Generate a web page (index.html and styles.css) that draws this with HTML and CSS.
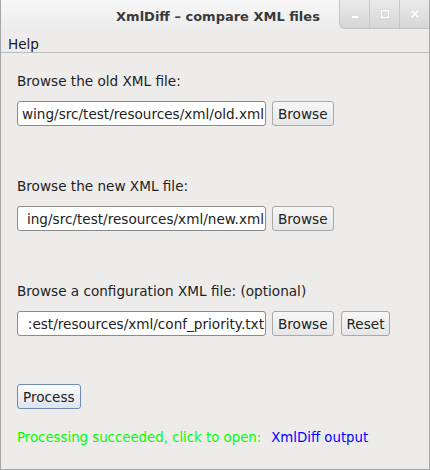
FILE: index.html
```html
<!DOCTYPE html>
<html>
<head>
<meta charset="utf-8">
<link rel="stylesheet" href="styles.css">
</head>
<body>
<div class="window">
  <div class="titlebar">
    <div class="title">XmlDiff – compare XML files</div>
    <div class="wbtns">
      <div class="wbtn"><svg width="10" height="10" viewBox="0 0 10 10"><rect x="2" y="7" width="6" height="2" fill="#fff"/></svg></div>
      <div class="wbtn"><svg width="10" height="10" viewBox="0 0 10 10"><rect x="1.5" y="1.5" width="7" height="7" fill="none" stroke="#fff" stroke-width="2"/></svg></div>
      <div class="wbtn"><svg width="10" height="10" viewBox="0 0 10 10"><path d="M1.5 1.5 L8.5 8.5 M8.5 1.5 L1.5 8.5" stroke="#fff" stroke-width="2"/></svg></div>
    </div>
  </div>
  <div class="menubar"><span class="menu">Help</span></div>
  <div class="content">
    <div class="section">
      <div class="label">Browse the old XML file:</div>
      <div class="row">
        <div class="field"><span class="ftext">wing/src/test/resources/xml/old.xml</span></div>
        <div class="btn">Browse</div>
      </div>
    </div>
    <div class="section">
      <div class="label">Browse the new XML file:</div>
      <div class="row">
        <div class="field"><span class="ftext">ing/src/test/resources/xml/new.xml</span></div>
        <div class="btn">Browse</div>
      </div>
    </div>
    <div class="section">
      <div class="label">Browse a configuration XML file: (optional)</div>
      <div class="row">
        <div class="field"><span class="ftext">:est/resources/xml/conf_priority.txt</span></div>
        <div class="btn">Browse</div>
        <div class="btn reset">Reset</div>
      </div>
    </div>
    <div class="process-row"><div class="btn process">Process</div></div>
    <div class="status"><span class="ok">Processing succeeded, click to open:</span><span class="link">XmlDiff output</span></div>
  </div>
</div>
</body>
</html>
```
FILE: styles.css
```css
html, body { margin: 0; padding: 0; }
body { font-family: "DejaVu Sans", sans-serif; font-size: 13.6px; color: #1a1a1a; background: #edeceb; }
.window { width: 430px; height: 470px; box-sizing: border-box; border-left: 1px solid #a6a6a6; border-right: 1px solid #a6a6a6; border-bottom: 1px solid #a6a6a6; background: #edeceb; display: flex; flex-direction: column; overflow: hidden; }
.titlebar { height: 30px; flex: none; display: flex; position: relative; background: linear-gradient(#f7f7f7, #ececec); }
.title { position: absolute; left: 0; right: 0; top: 0; height: 30px; line-height: 33px; text-align: center; padding-left: 6px; font-weight: bold; color: #3a3a3a; font-size: 13px; }
.wbtns { margin-left: auto; display: flex; height: 28px; border-bottom-left-radius: 6px; border-left: 1px solid #c4c4c4; border-bottom: 1px solid #c4c4c4; background: linear-gradient(#eaeaea, #d6d6d6); position: relative; }
.wbtn { width: 29px; display: flex; align-items: center; justify-content: center; border-left: 1px solid #c8c8c8; }
.wbtn:first-child { border-left: none; }
.wbtn svg { filter: drop-shadow(0 0 0.6px #999); }
.menubar { height: 22px; flex: none; border-bottom: 1px solid #bcbcbc; display: flex; align-items: center; padding-left: 7px; background: #edeceb; }
.menu { color: #1a1a1a; padding-top: 5px; }
.content { padding: 19px 0 0 16px; display: flex; flex-direction: column; }
.section { display: flex; flex-direction: column; height: 105px; }
.label { height: 18px; line-height: 18px; color: #222; }
.row { display: flex; gap: 6px; margin-top: 11px; align-items: center; }
.field { width: 246px; height: 23px; box-sizing: content-box; border: 1px solid #8a8a8a; border-radius: 3px; background: #fff; overflow: hidden; display: flex; align-items: center; justify-content: flex-end; padding: 0 1px 0 0; }
.ftext { white-space: nowrap; color: #222; }
.btn { height: 23px; border: 1px solid #a8a8a8; border-radius: 3px; background: linear-gradient(#f7f7f7, #e6e6e6); padding: 0 5px; display: flex; align-items: center; justify-content: center; color: #222; }
.reset { margin-left: 1px; }
.process-row { margin-top: -3px; display: flex; }
.process { border-color: #6f8ab3; background: linear-gradient(#fbfcfe, #dde3ec); }
.status { margin-top: 21px; white-space: nowrap; font-size: 13.3px; }
.ok { color: #00ff00; }
.link { color: #0000ff; margin-left: 10px; }
```
